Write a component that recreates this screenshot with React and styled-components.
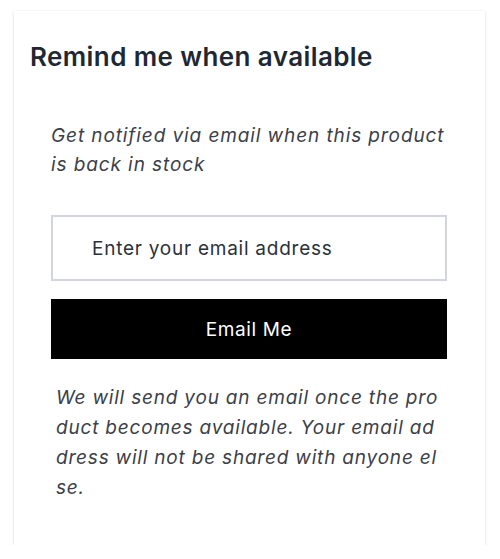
import React from "react";
import styled, { createGlobalStyle } from "styled-components";

const Global = createGlobalStyle`
  html, body { margin: 0; padding: 0; background: #ffffff; }
  body { font-family: Inter, "Noto Sans", sans-serif; }
  * { box-sizing: border-box; }
`;

const Card = styled.section`
  margin: 11px 15px 0 14px;
  width: 471px;
  height: 534px;
  background: #fff;
  box-shadow: 0 1px 3px rgba(0, 0, 0, 0.12), 0 0 1px rgba(0, 0, 0, 0.08);
  padding: 29px 38px 0 37px;
  display: flex;
  flex-direction: column;
`;

const Title = styled.h2`
  margin: 0 0 0 -21px;
  font-size: 26px;
  line-height: 34px;
  font-weight: 600;
  color: #1e2833;
  letter-spacing: 0.4px;
`;

const Lead = styled.p`
  margin: 47px 0 0 0;
  font-size: 19px;
  line-height: 29px;
  font-style: italic;
  color: #3b4048;
  letter-spacing: 0.9px;
`;

const EmailInput = styled.input`
  margin-top: 36px;
  width: 396px;
  height: 66px;
  border: 2px solid #d2d5d9;
  border-radius: 0;
  padding: 0 0 0 39px;
  font-family: inherit;
  font-size: 19px;
  letter-spacing: 0.75px;
  color: #1f2731;
  outline: none;
  &::placeholder { color: #2a313a; opacity: 1; }
`;

const Submit = styled.button`
  margin-top: 18px;
  width: 396px;
  height: 60px;
  border: none;
  border-radius: 0;
  background: #000;
  color: #fff;
  font-family: inherit;
  font-size: 19px;
  letter-spacing: 0.6px;
  cursor: pointer;
`;

const Note = styled.p`
  margin: 24px 5px 0 5px;
  font-size: 19px;
  line-height: 30px;
  font-style: italic;
  color: #3b4048;
  letter-spacing: 0.8px;
  word-break: break-all;
`;

export default function App() {
  return (
    <>
      <Global />
      <Card>
        <Title>Remind me when available</Title>
        <Lead>Get notified via email when this product is back in stock</Lead>
        <EmailInput type="email" placeholder="Enter your email address" />
        <Submit>Email Me</Submit>
        <Note>
          We will send you an email once the product becomes available. Your
          email address will not be shared with anyone else.
        </Note>
      </Card>
    </>
  );
}
